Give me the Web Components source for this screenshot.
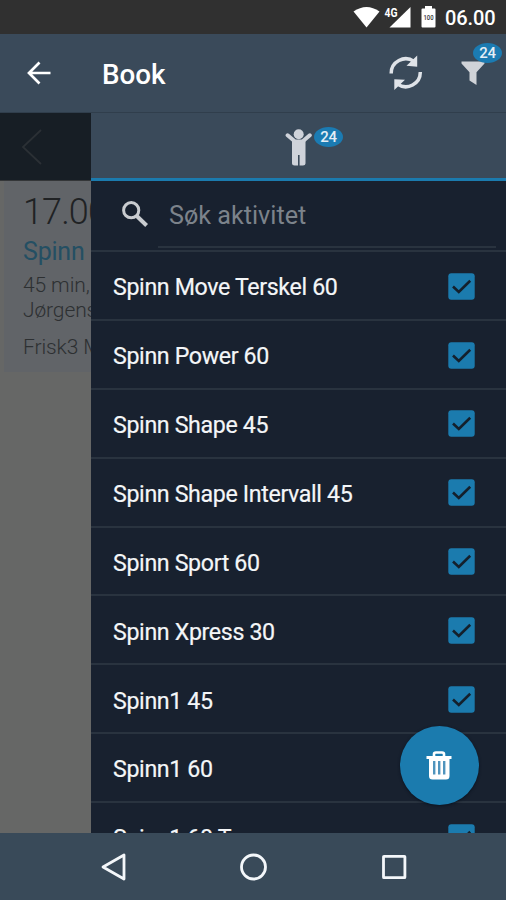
<!DOCTYPE html>
<html lang="no">
<head>
<meta charset="utf-8">
<title>Book</title>
<style>
html,body{margin:0;height:100%;background:#394a59}
body{font-family:Roboto,"Liberation Sans",sans-serif;overflow:hidden}
</style>
</head>
<body>
<booking-screen></booking-screen>
<script>
const define = (name, html) => customElements.define(name, class extends HTMLElement {
  constructor() {
    super();
    const t = document.createElement('template');
    t.innerHTML = html;
    this.attachShadow({mode: 'open'}).append(t.content.cloneNode(true));
  }
});

define('count-badge', `<style>
:host{display:flex;align-items:center;justify-content:center;width:29px;height:20px;border-radius:50%;background:#1b7bb2;color:#e4eef6;font-size:15px;font-weight:500;line-height:20px;letter-spacing:-.3px}
</style><slot></slot>`);

define('status-bar', `<style>
:host{display:flex;align-items:center;height:34px;background:#303030;color:#fff;padding-left:353px;box-sizing:border-box}
svg{flex:none;display:block}
.t{font-size:20px;font-weight:500;line-height:34px;margin:2px 0 0 8px;white-space:nowrap;letter-spacing:-.1px}
</style>
<svg width="84" height="34" viewBox="353 0 84 34" fill="#fff">
<path d="M353.500 11.500Q366.500 2.500 379.500 11.500L366.500 27.500Z"/>
<path d="M410.500 7V27.500H389.500Z"/>
<text x="384.500" y="16.500" font-size="12" font-weight="700" textLength="13" lengthAdjust="spacingAndGlyphs" stroke="#303030" stroke-width="2" paint-order="stroke">4G</text>
<path d="M425 6h7v2.500h2.500q1 0 1 1V26.500q0 1-1 1h-12q-1 0-1-1V9.500q0-1 1-1H425Z"/>
<text x="423.500" y="20" font-size="7" font-weight="500" fill="#333" textLength="10" lengthAdjust="spacingAndGlyphs">100</text>
</svg><span class="t">06.00</span>`);

define('app-bar', `<style>
:host{display:flex;align-items:center;height:79px;background:#3a4a5a;box-sizing:border-box;border-bottom:1px solid #303e4c;color:#fff}
.back{margin-left:27px;width:24px}
.title{margin-left:51px;flex:1;font-size:27.800px;font-weight:500;line-height:40px;padding-top:4px}
svg{display:block}
.sync{width:34px;margin-right:38px}
.filter{position:relative;width:24px;margin-right:21px}
count-badge{position:absolute;left:12px;top:-18px}
</style>
<div class="back"><svg width="24" height="24" viewBox="0 0 24 24" fill="none" stroke="#fff" stroke-width="2.700"><path d="M23.500 12H2.500M12.500 1.500L2 12l10.500 10.500"/></svg></div>
<div class="title"><slot></slot></div>
<div class="sync"><svg width="34" height="36" viewBox="389 56 34 36" fill="none"><g stroke="#dfe3e8" stroke-width="3.500"><path d="M391.200 74.500A14.500 14.500 0 0 1 414 62.400"/><path d="M420.300 73A14.500 14.500 0 0 1 397.500 85.100"/></g><path d="M417.200 56.500V67.700L406.500 66.700ZM394.300 91V80.200L405 80.800Z" fill="#dfe3e8"/></svg></div>
<div class="filter"><svg width="24" height="24" viewBox="461 62 24 24" fill="#d0d3d8"><path d="M461.500 62.500H484.500V64.500L476.500 73.300V86L469.500 81.500V73.300L461.500 64.500Z"/></svg><count-badge>24</count-badge></div>`);

define('booking-page', `<style>
:host{display:flex;flex-direction:column;width:91px;flex:none;overflow:hidden;background:#666766;white-space:nowrap;font-weight:300}
.nav{height:67px;background:#171e25;border-bottom:1px solid #343638;flex:none;display:flex;align-items:center}
.nav svg{margin-left:21px;margin-top:1px}
.card{margin-left:4px;height:191px;background:#616468;padding:3px 0 0 19px;box-sizing:border-box;color:#2d3032}
.time{font-size:36px;line-height:56px;color:#202224;letter-spacing:-.900px}
.name{font-size:25px;line-height:25px;color:#244f63;margin-top:-1px;font-weight:400;letter-spacing:-.2px}
.info{font-size:21px;line-height:25px;margin-top:9px;letter-spacing:-.1px}
.place{font-size:21px;line-height:25px;margin-top:12px;letter-spacing:-.1px}
</style>
<div class="nav"><svg width="22" height="36" viewBox="0 0 22 36" fill="none" stroke="#2b3035" stroke-width="1.800"><path d="M20 1L2 18l18 17"/></svg></div>
<div class="card"><div class="time">17.00</div><div class="name">Spinn</div><div class="info">45 min,<br>Jørgens</div><div class="place">Frisk3 M</div></div>`);

define('activity-tab', `<style>
:host{display:flex;height:68px;box-sizing:border-box;border-bottom:3px solid #1b7bae;background:#3a4a5a;padding:15px 0 0 194px;flex:none}
count-badge{margin:-1px 0 0 2px}
</style>
<svg width="27" height="38" viewBox="285 128 27 38" fill="#cfd3da"><circle cx="298.700" cy="134.200" r="5"/><path d="M287.600 135.300L295 141.500H302.500L309.800 135.300" fill="none" stroke="#cfd3da" stroke-width="4" stroke-linecap="round" stroke-linejoin="round"/><path d="M292 140H305.500V163.500Q305.500 165.500 303 165.500H299.600V155H298V165.500H294.500Q292 165.500 292 163.500Z"/></svg>
<count-badge>24</count-badge>`);

define('search-field', `<style>
:host{display:flex;height:71px;box-sizing:border-box;border-bottom:2px solid #29333f;flex:none;padding-left:31px}
svg{flex:none;margin-top:19px}
.field{flex:1;margin:0 10px 3px 8px;border-bottom:2px solid #29333f;box-sizing:border-box;padding-left:11px;font-size:25.200px;line-height:69px;height:67px;color:#7c838b}
</style>
<svg width="28" height="28" viewBox="122 200 28 28" fill="none" stroke="#c9ccd0"><circle cx="131.200" cy="210.200" r="7.600" stroke-width="3"/><path d="M136.500 215.800L146.600 225.500" stroke-width="4"/></svg>
<div class="field"><slot></slot></div>`);

define('check-box', `<style>:host{display:block;width:27px;height:27px}svg{display:block}</style>
<svg width="27" height="27" viewBox="0 0 27 27"><rect x=".300" y=".300" width="26.400" height="26.400" rx="3" fill="#1b7bae"/><path d="M5 13.500L10.800 19L22.200 7.800" fill="none" stroke="#14202c" stroke-width="2.600"/></svg>`);

define('activity-row', `<style>
:host{display:flex;align-items:center;height:68.900px;box-sizing:border-box;border-bottom:2px solid #29333f;padding:1.500px 31px 0 22px;flex:none;color:#f4f6f8;font-size:23.200px;letter-spacing:-.350px;white-space:nowrap;-webkit-text-stroke:.2px #f4f6f8}
span{flex:1;padding-top:2px}
</style><span><slot></slot></span><check-box></check-box>`);

define('activity-drawer', `<style>
:host{display:flex;flex-direction:column;flex:1;min-width:0;overflow:hidden;background:#18212f}
</style><activity-tab></activity-tab><search-field>Søk aktivitet</search-field><slot></slot>`);

define('delete-button', `<style>
:host{display:flex;align-items:center;justify-content:center;width:79px;height:79px;border-radius:50%;background:#1b7bae;box-shadow:0 1px 3px #0b1320}
svg{margin-left:-1px}
</style><svg width="26" height="29" viewBox="0 0 26 29"><path d="M8 5V3Q8 1.500 10 1.500H16Q18 1.500 18 3V5" fill="none" stroke="#fff" stroke-width="2.600"/><path d="M.500 5H25.500V8H23.500V25Q23.500 28.500 20 28.500H6.500Q3 28.500 3 25V8H.500Z" fill="#fff"/><path d="M8.200 10V23.500M13.200 10V23.500M18.200 10V23.500" stroke="#4f94bd" stroke-width="2.400"/></svg>`);

define('system-nav', `<style>
:host{display:grid;grid-template-columns:repeat(3,140.500px);justify-content:center;place-items:center;height:67px;background:#394a59;flex:none}
svg{display:block}
</style>
<svg width="28" height="28" viewBox="0 0 28 28"><path d="M25 2V26L4 14Z" fill="none" stroke="#f4f7fa" stroke-width="2.800" stroke-linejoin="round"/></svg>
<svg width="28" height="28" viewBox="0 0 28 28"><circle cx="14.500" cy="14" r="12" fill="none" stroke="#f4f7fa" stroke-width="2.800"/></svg>
<svg width="28" height="28" viewBox="0 0 28 28"><rect x="3.500" y="3.300" width="21.400" height="21.400" rx=".500" fill="none" stroke="#f4f7fa" stroke-width="2.800"/></svg>`);

const names = ['Spinn Move Terskel 60','Spinn Power 60','Spinn Shape 45','Spinn Shape Intervall 45','Spinn Sport 60','Spinn Xpress 30','Spinn1 45','Spinn1 60','Spinn1 60 T'];
define('booking-screen', `<style>
:host{display:flex;flex-direction:column;width:506px;height:900px;position:relative;overflow:hidden}
main{display:flex;height:720px;overflow:hidden}
delete-button{position:absolute;left:400px;top:726px}
</style>
<status-bar></status-bar><app-bar>Book</app-bar>
<main><booking-page></booking-page><activity-drawer>${names.map(n => `<activity-row>${n}</activity-row>`).join('')}</activity-drawer></main>
<system-nav></system-nav><delete-button></delete-button>`);
</script>
</body>
</html>
